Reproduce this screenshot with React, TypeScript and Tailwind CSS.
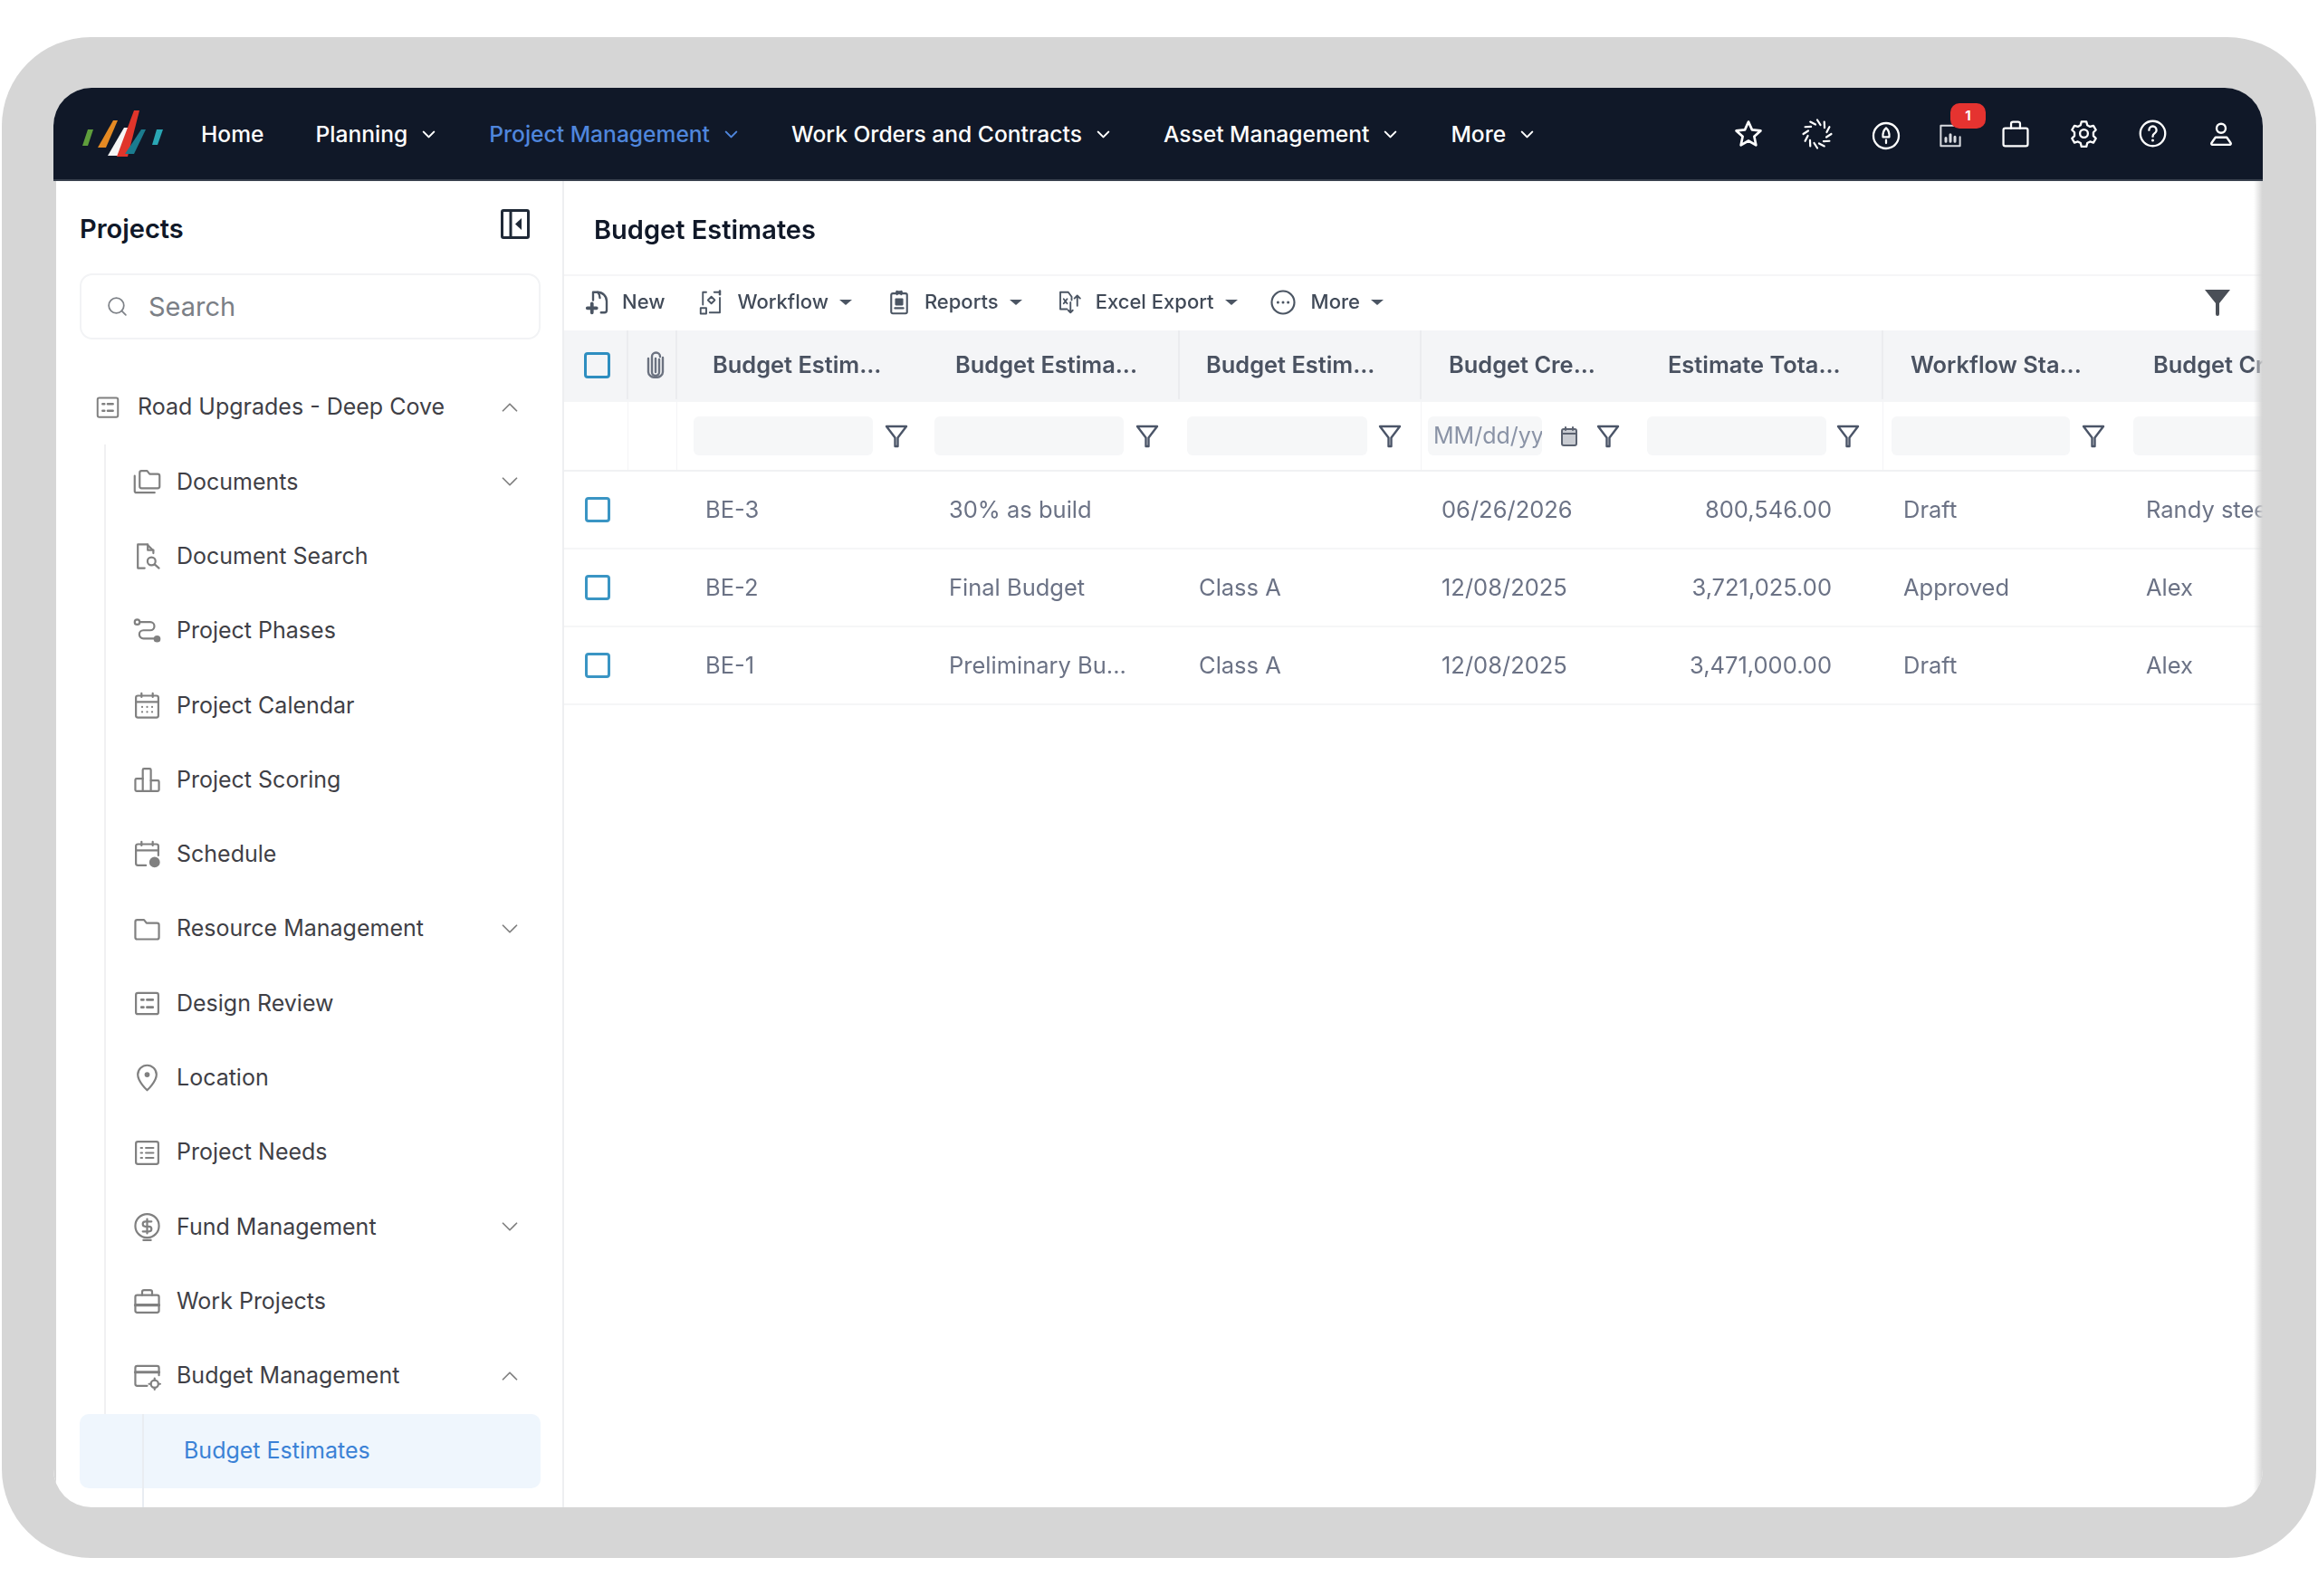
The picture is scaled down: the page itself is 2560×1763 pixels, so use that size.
import type { ReactNode } from "react";
import { ChevronDown, ChevronUp, Search } from "lucide-react";

function Ic({ size = 33, sw = 1.6, color = "#808080", children }: { size?: number; sw?: number; color?: string; children: ReactNode }) {
  return (
    <svg width={size} height={size} viewBox="0 0 24 24" fill="none" stroke={color} strokeWidth={sw} strokeLinecap="round" strokeLinejoin="round" className="shrink-0">
      {children}
    </svg>
  );
}

const SIDE_ICONS: Record<string, ReactNode> = {
  documents: (
    <>
      <path d="M2 7v12a1.5 1.5 0 0 0 1.5 1.5H18" />
      <path d="M6 4.5A1.5 1.5 0 0 1 7.500 3h4.500l2 2.500h6.500A1.500 1.500 0 0 1 22 7v8.500a1.500 1.500 0 0 1-1.500 1.500h-13A1.500 1.500 0 0 1 6 15.500z" />
    </>
  ),
  search: (
    <>
      <path d="M10 21.500H4.500V2.500H12l5 5v2" />
      <path d="M12.500 2.500v4.500H17" />
      <circle cx="15.500" cy="16" r="3.200" />
      <path d="m18 18.500 3.500 3" />
    </>
  ),
  phases: (
    <>
      <circle cx="4" cy="4.500" r="2" />
      <path d="M6 4.500h8.500a3.300 3.300 0 0 1 0 6.600H9a3.300 3.300 0 0 0 0 6.600h9" />
      <circle cx="20" cy="18" r="2" fill="#808080" />
    </>
  ),
  calendar: (
    <>
      <rect x="3" y="4" width="18" height="17.500" rx="1.500" />
      <path d="M3 9h18M7.500 2v3M16.500 2v3" />
      <path d="M8 13h.01M12 13h.01M16 13h.01M8 17h.01M12 17h.01M16 17h.01" />
    </>
  ),
  scoring: (
    <>
      <path d="M8.500 21V4a1 1 0 0 1 1-1h4.500a1 1 0 0 1 1 1v17" />
      <path d="M8.500 11H3.500a1 1 0 0 0-1 1v8a1 1 0 0 0 1 1h17a1 1 0 0 0 1-1v-6.500a1 1 0 0 0-1-1H15" />
    </>
  ),
  schedule: (
    <>
      <path d="M11 21H4.500A1.500 1.500 0 0 1 3 19.500V5.500A1.500 1.500 0 0 1 4.500 4h15A1.500 1.500 0 0 1 21 5.500V13" />
      <path d="M3 9h18M7.500 2v3M16.500 2v3" />
      <circle cx="18" cy="18.500" r="3.500" fill="#808080" />
    </>
  ),
  folder: <path d="M2.500 6A1.500 1.500 0 0 1 4 4.500h5.500l2 2.500H20A1.500 1.500 0 0 1 21.500 8.500v10A1.500 1.500 0 0 1 20 20H4a1.500 1.500 0 0 1-1.500-1.500z" />,
  review: (
    <>
      <rect x="3" y="3.500" width="18" height="17" rx="1.500" />
      <path d="M7.500 9h1.500M12 9h4.500M7.500 15h1.500M12 15h4.500" strokeWidth="2.100" />
    </>
  ),
  location: (
    <>
      <path d="M12 22s7.500-6.800 7.500-12.500a7.500 7.500 0 0 0-15 0C4.500 15.200 12 22 12 22z" />
      <circle cx="12" cy="9.500" r="1.300" fill="#808080" />
    </>
  ),
  needs: (
    <>
      <rect x="3" y="3" width="18" height="18" rx="1.500" />
      <path d="M7 8h1M11 8h6M7 12h1M11 12h6M7 16h1M11 16h6" />
    </>
  ),
  fund: (
    <>
      <circle cx="12" cy="11" r="9.500" />
      <path d="M15.500 7.500h-5a2 2 0 0 0 0 4h3a2 2 0 0 1 0 4h-5M12 5.500v11.500" />
      <path d="M9 22.500h6" />
    </>
  ),
  work: (
    <>
      <rect x="2.500" y="7" width="19" height="14" rx="1.500" />
      <path d="M8 7V4.500a1.500 1.500 0 0 1 1.500-1.500h5A1.500 1.500 0 0 1 16 4.500V7" />
      <path d="M2.500 15h19" strokeWidth="2.200" />
    </>
  ),
  budget: (
    <>
      <path d="M21.500 11V5A1.500 1.500 0 0 0 20 3.500H4A1.500 1.500 0 0 0 2.500 5v13A1.500 1.500 0 0 0 4 19.500h8" />
      <path d="M2.500 8.500h19" strokeWidth="2.200" />
      <circle cx="18" cy="18" r="3" />
      <path d="M18 13.500v1.500M18 21v1.500M13.500 18H15M21 18h1.500" />
    </>
  ),
};

const ITEMS = [
  { key: "documents", label: "Documents", chev: "down" },
  { key: "search", label: "Document Search" },
  { key: "phases", label: "Project Phases" },
  { key: "calendar", label: "Project Calendar" },
  { key: "scoring", label: "Project Scoring" },
  { key: "schedule", label: "Schedule" },
  { key: "folder", label: "Resource Management", chev: "down" },
  { key: "review", label: "Design Review" },
  { key: "location", label: "Location" },
  { key: "needs", label: "Project Needs" },
  { key: "fund", label: "Fund Management", chev: "down" },
  { key: "work", label: "Work Projects" },
  { key: "budget", label: "Budget Management", chev: "up" },
];

const NAV = [
  { label: "Planning" },
  { label: "Project Management", active: true },
  { label: "Work Orders and Contracts" },
  { label: "Asset Management" },
  { label: "More" },
];

function Logo() {
  return (
    <svg width="92" height="56" viewBox="88 120 92 56" className="shrink-0">
      <path d="M96 143h6l-6 18h-6z" fill="#5f9e3c" />
      <path d="M124 133h5l-13 30h-9z" fill="#e58a23" />
      <path d="M136 141h6l-13 31h-11z" fill="#f5f5f5" />
      <path d="M147 122h6l-13 51h-12z" fill="#e0352b" />
      <path d="M155 143h5l-13 27h-10z" fill="#1b7c8f" />
      <path d="M172 143h7l-6 17h-6z" fill="#2aa7b5" />
    </svg>
  );
}

function Spinner() {
  const angles = [0, 30, 60, 90, 120, 150, 180, 210, 240, 270, 300, 330];
  return (
    <svg width="36" height="36" viewBox="0 0 36 36" fill="none" stroke="#fff" strokeWidth="2.200" strokeLinecap="round">
      {angles.map((a) => (
        <path key={a} d="M18 2.500 21.500 8" transform={`rotate(${a} 18 18)`} />
      ))}
    </svg>
  );
}

function TopIcons() {
  return (
    <div className="ml-auto flex items-center pr-[9px]">
      <div className="flex w-[76px] justify-center">
        <Ic size={34} sw={1.9} color="#fff">
          <path d="m12 2.500 2.800 6.200 6.700.8-5 4.500 1.400 6.700L12 17.300 6.100 20.700l1.400-6.700-5-4.500 6.700-.8z" />
        </Ic>
      </div>
      <div className="flex w-[76px] justify-center">
        <Spinner />
      </div>
      <div className="flex w-[73px] justify-center pl-[3px] pt-[5px]">
        <Ic size={32} sw={1.700} color="#fff">
          <circle cx="12" cy="12" r="10.500" />
          <path d="M12 5.500c2 1.800 3 3.800 2.600 7.500H9.400C9 9.300 10 7.300 12 5.500z" />
          <path d="M12 15.500v2.500" />
        </Ic>
      </div>
      <div className="relative flex w-[66px] justify-center pl-[5px] pt-[5px]">
        <Ic size={30} sw={1.600} color="#d9dbe0">
          <path d="M15 3H3.500v18h17v-8" />
          <path d="M8 17v-3M12 17v-6M16 17v-4" strokeWidth="2.400" />
        </Ic>
        <span className="absolute left-[36px] top-[-16px] flex h-[28px] w-[39px] items-center justify-center rounded-[10px] bg-[#e53330] text-[15px] font-bold text-white">1</span>
      </div>
      <div className="flex w-[80px] justify-center pl-[4px]">
        <Ic size={34} sw={1.600} color="#fff">
          <rect x="2.500" y="7.500" width="19" height="14" rx="1.500" />
          <path d="M8.500 7.500V4a1.500 1.500 0 0 1 1.500-1.500h4A1.500 1.500 0 0 1 15.500 4v3.500" />
        </Ic>
      </div>
      <div className="flex w-[74px] justify-center">
        <Ic size={33} sw={1.700} color="#fff">
          <path d="M10 2.500h4l.7 2.800 2.200 1.200 2.700-.8 2 3.400-2 2v2.800l2 2-2 3.400-2.700-.8-2.200 1.200-.7 2.800h-4l-.7-2.800-2.200-1.200-2.700.8-2-3.400 2-2v-2.800l-2-2 2-3.400 2.700.8 2.200-1.200z" />
          <circle cx="12" cy="12" r="3.200" />
        </Ic>
      </div>
      <div className="flex w-[78px] justify-center">
        <Ic size={33} sw={1.700} color="#fff">
          <circle cx="12" cy="12" r="10" />
          <path d="M9 9.200a3 3 0 1 1 4.500 2.600c-1 .6-1.500 1.300-1.500 2.500" />
          <path d="M12 17.500h.01" strokeWidth="2.200" />
        </Ic>
      </div>
      <div className="flex w-[74px] justify-center">
        <Ic size={30} sw={1.900} color="#fff">
          <circle cx="12" cy="7" r="4" />
          <path d="M7 15h10l3.500 5a1 1 0 0 1-.8 1.500H4.300A1 1 0 0 1 3.500 20z" />
        </Ic>
      </div>
    </div>
  );
}

function TopBar() {
  return (
    <header className="flex h-[103px] shrink-0 items-center border-b-2 border-[#39414e] bg-[#101828] pl-[30px]">
      <Logo />
      <nav className="ml-[41px] flex items-center gap-[55px] pt-[2px] text-[24.6px] font-medium text-white">
        <span className="mr-[2px]">Home</span>
        {NAV.map((n) => (
          <span key={n.label} className={n.active ? "flex items-center gap-[12px] text-[#4f86dc]" : "flex items-center gap-[12px]"}>
            {n.label}
            <ChevronDown size={23} strokeWidth={2.2} className={n.active ? "text-[#4f86dc]" : "text-white"} />
          </span>
        ))}
      </nav>
      <TopIcons />
    </header>
  );
}

function SideRow({ item }: { item: (typeof ITEMS)[number] }) {
  return (
    <div className="flex h-[82.3px] items-center pl-[58px] pr-[19px] text-[25px] text-[#3f3f46]">
      <span className="flex w-[49px] shrink-0 justify-start">
        <Ic>{SIDE_ICONS[item.key]}</Ic>
      </span>
      <span>{item.label}</span>
      {item.chev === "down" && <ChevronDown size={30} strokeWidth={1.4} className="ml-auto text-[#808080]" />}
      {item.chev === "up" && <ChevronUp size={30} strokeWidth={1.4} className="ml-auto text-[#808080]" />}
    </div>
  );
}

function Sidebar() {
  return (
    <aside className="flex w-[561px] shrink-0 flex-col overflow-hidden border-r-2 border-[#eeeff1] pl-[26px] pr-[24px]">
      <div className="flex h-[102px] shrink-0 items-center justify-between pt-[4px]">
        <h2 className="text-[29px] font-semibold text-[#101828]">Projects</h2>
        <svg width="32" height="33" viewBox="0 0 32 33" fill="none" className="mb-[12px] mr-[12px]">
          <rect x="1.500" y="1.500" width="29" height="30" rx="1.500" stroke="#1f2937" strokeWidth="3" />
          <path d="M11 2v29" stroke="#1f2937" strokeWidth="3" />
          <path d="M23 10v13l-7-6.500z" fill="#1f2937" />
        </svg>
      </div>
      <div className="flex h-[73px] shrink-0 items-center rounded-[14px] border-2 border-[#f2f3f5] pl-[27px] text-[29px] text-[#7b7f86]">
        <Search size={25} strokeWidth={1.7} className="mr-[22px] text-[#7f8389]" />
        Search
      </div>
      <div className="relative mt-[34px]">
        <span className="absolute bottom-0 left-[27px] top-[82px] w-[2px] bg-[#f0f0f2]" />
        <div className="flex h-[82.3px] items-center pl-[16px] pr-[19px] text-[25px] text-[#3f3f46]">
          <span className="w-[48px] shrink-0">
            <Ic size={30}>{SIDE_ICONS.review}</Ic>
          </span>
          <span>Road Upgrades - Deep Cove</span>
          <ChevronUp size={30} strokeWidth={1.4} className="ml-auto text-[#808080]" />
        </div>
        {ITEMS.map((it) => (
          <SideRow key={it.key} item={it} />
        ))}
        <div className="relative mt-[1px] flex h-[82px] items-center rounded-[10px] bg-[#eff6fd] pl-[115px] text-[25px] text-[#3b82d6]">
          <span className="absolute left-[69px] top-0 h-[104px] w-[2px] bg-[#e9edf2]" />
          Budget Estimates
        </div>
      </div>
    </aside>
  );
}

function Caret() {
  return <span className="ml-[12px] h-0 w-0 border-x-[7px] border-t-[6px] border-x-transparent border-t-[#4b5563]" />;
}

function Toolbar() {
  const dark = "#4b5563";
  return (
    <div className="flex h-[62px] shrink-0 items-center border-t-2 border-[#f6f6f7] pb-[3px] pl-[22px] pr-[35px] text-[22px] font-medium text-[#414a58]">
      <span className="flex items-center gap-[12px]">
        <Ic size={30} sw={1.900} color={dark}>
          <path d="M8 10V3h4a8 8 0 0 1 8 8v8a2 2 0 0 1-2 2h-3" />
          <path d="M12 3c1.500 1.500 2 3 2 5" />
          <path d="M7 13v8M3 17h8" strokeWidth="3" />
        </Ic>
        New
      </span>
      <span className="ml-[36px] flex items-center gap-[14px]">
        <span className="flex items-center">
          <Ic size={30} sw={1.500} color={dark}>
            <path d="M8 3H5v11M20 8v13H11M15 3h4" />
            <path d="m12.500 7 3 3-3 3-3-3z" />
            <rect x="3" y="17" width="5" height="5" />
            <path d="M20 2v3" strokeWidth="2" />
          </Ic>
        </span>
        <span className="flex items-center">
          Workflow
          <Caret />
        </span>
      </span>
      <span className="ml-[38px] flex items-center gap-[14px]">
        <Ic size={28} sw={1.800} color={dark}>
          <rect x="4.500" y="3.500" width="15" height="19" rx="1.500" />
          <path d="M9.500 2h5M10 1.500v3M14 1.500v3" />
          <rect x="9" y="9" width="6" height="5" fill={dark} />
          <path d="M8 17.500h8" />
        </Ic>
        <span className="flex items-center">
          Reports
          <Caret />
        </span>
      </span>
      <span className="ml-[37px] flex items-center gap-[14px]">
        <Ic size={30} sw={1.500} color={dark}>
          <path d="M10 18H4V3h7l3 4v3" />
          <path d="m7 9 3 4M10 9l-3 4" />
          <path d="M19 6v9M16.500 8.500 19 6l2.500 2.500M13 12v9M11 19l2 2 2-2" />
        </Ic>
        <span className="flex items-center">
          Excel Export
          <Caret />
        </span>
      </span>
      <span className="ml-[35px] flex items-center gap-[16px]">
        <Ic size={30} sw={1.700} color={dark}>
          <circle cx="12" cy="12" r="10" />
          <path d="M7.500 12h.01M12 12h.01M16.500 12h.01" strokeWidth="2.400" />
        </Ic>
        <span className="flex items-center">
          More
          <Caret />
        </span>
      </span>
      <svg width="30" height="30" viewBox="0 0 30 30" className="ml-auto" fill="#4a4f57">
        <path d="M1 1h28L17 16v12a2 2 0 0 1-4 0V16z" />
      </svg>
    </div>
  );
}

function Check({ dim }: { dim?: boolean }) {
  return <span className={dim ? "h-[28px] w-[28px] rounded-[4px] border-[3px] border-[#3a95c4]" : "h-[29px] w-[29px] rounded-[4px] border-[3px] border-[#2e8ec0]"} />;
}

function FilterIcon() {
  return (
    <svg width="26" height="26" viewBox="0 0 26 26" fill="none" stroke="#4b5568" strokeWidth="2.400" strokeLinejoin="round" className="shrink-0">
      <path d="M2 2h22L14.500 14.500V24h-3V14.500z" />
    </svg>
  );
}

function FilterBox({ className }: { className: string }) {
  return <span className={`h-[43px] rounded-[6px] bg-[#f6f7f8] ${className}`} />;
}

const GRID = "grid grid-cols-[71px_54px_278px_277px_267px_240px_270px_270px_200px]";

const ROWS = [
  { id: "BE-3", name: "30% as build", cls: "", date: "06/26/2026", total: "800,546.00", state: "Draft", by: "Randy steel" },
  { id: "BE-2", name: "Final Budget", cls: "Class A", date: "12/08/2025", total: "3,721,025.00", state: "Approved", by: "Alex" },
  { id: "BE-1", name: "Preliminary Bu...", cls: "Class A", date: "12/08/2025", total: "3,471,000.00", state: "Draft", by: "Alex" },
];

function Table() {
  return (
    <div className="min-w-0 overflow-hidden">
      <div className={`${GRID} h-[79px] items-center bg-[#f4f5f7] pb-[3px] text-[25.4px] font-semibold whitespace-nowrap text-[#4a5261]`}>
        <div className="flex h-full items-center border-r-2 border-[#ebecef] pl-[22px]">
          <Check />
        </div>
        <div className="flex h-full items-center justify-center border-r-2 border-[#ebecef] pl-[8px]">
          <svg width="20" height="30" viewBox="0 0 20 30" fill="none" stroke="#6b7280" strokeWidth="2.400" strokeLinecap="round">
            <path d="M14 9v14a4 4 0 0 1-8 0V6a4.500 4.500 0 0 1 9 0" />
            <path d="M10 8v15M2 8v15a8 6 0 0 0 16 0V7" />
          </svg>
        </div>
        <div className="pl-[39px]">Budget Estim...</div>
        <div className="flex h-full items-center border-r-2 border-[#ebecef] pl-[29px]">Budget Estima...</div>
        <div className="flex h-full items-center border-r-2 border-[#ebecef] pl-[29px]">Budget Estim...</div>
        <div className="pl-[30px]">Budget Cre...</div>
        <div className="flex h-full items-center border-r-2 border-[#ebecef] pl-[32px]">Estimate Tota...</div>
        <div className="pl-[30px]">Workflow Sta...</div>
        <div className="pl-[28px]">Budget Created</div>
      </div>
      <div className={`${GRID} h-[77px] items-center border-b-2 border-[#f0f1f3]`}>
        <div className="h-full border-r border-[#f4f4f6]" />
        <div className="h-full border-r border-[#f4f4f6]" />
        <div className="flex items-center gap-[13px] pl-[18px]">
          <FilterBox className="w-[198px]" />
          <FilterIcon />
        </div>
        <div className="flex items-center gap-[13px] pl-[6px]">
          <FilterBox className="w-[209px]" />
          <FilterIcon />
        </div>
        <div className="flex h-full items-center gap-[12px] border-r border-[#f4f4f6] pl-[8px]">
          <FilterBox className="w-[199px]" />
          <FilterIcon />
        </div>
        <div className="flex items-center pl-[7px]">
          <span className="flex h-[43px] w-[126px] items-center overflow-hidden rounded-[6px] bg-[#f6f7f8] pl-[6px] text-[25px] whitespace-nowrap text-[#8a93a6]">MM/dd/yy</span>
          <span className="ml-[18px]">
            <Ic size={24} sw={2} color="#5b6270">
              <rect x="4" y="4" width="16" height="18" rx="2" fill="#c9ccd2" />
              <path d="M4 9h16M8 2v3M16 2v3" />
            </Ic>
          </span>
          <span className="ml-[18px]">
            <FilterIcon />
          </span>
        </div>
        <div className="flex h-full items-center gap-[11px] border-r border-[#f4f4f6] pl-[9px]">
          <FilterBox className="w-[198px]" />
          <FilterIcon />
        </div>
        <div className="flex items-center gap-[13px] pl-[9px]">
          <FilterBox className="w-[197px]" />
          <FilterIcon />
        </div>
        <div className="pl-[6px]">
          <FilterBox className="block w-[190px]" />
        </div>
      </div>
      {ROWS.map((r) => (
        <div key={r.id} className={`${GRID} h-[86px] items-center border-b-2 border-[#f5f6f7] text-[25.5px] whitespace-nowrap text-[#6b7285]`}>
          <div className="flex pl-[23px]">
            <Check dim />
          </div>
          <div />
          <div className="pl-[31px]">{r.id}</div>
          <div className="pl-[22px]">{r.name}</div>
          <div className="pl-[21px]">{r.cls}</div>
          <div className="pl-[22px]">{r.date}</div>
          <div className="pr-[57px] text-right">{r.total}</div>
          <div className="pl-[22px]">{r.state}</div>
          <div className="pl-[20px]">{r.by}</div>
        </div>
      ))}
    </div>
  );
}

export default function App() {
  return (
    <div className="h-[1763px] w-[2560px] overflow-hidden bg-white pl-[2px] pt-[41px] [font-family:Inter,sans-serif]">
      <div className="h-[1680px] w-[2556px] rounded-[98px] bg-[#d6d6d6] pl-[57px] pt-[56px]">
        <div className="relative flex h-[1568px] w-[2440px] flex-col overflow-hidden rounded-[42px] bg-white blur-[0.5px]">
          <TopBar />
          <div className="flex min-h-0 flex-1 border-l-[3px] border-[#d6d6d6]">
            <Sidebar />
            <main className="flex min-w-0 flex-1 flex-col">
              <div className="flex h-[103px] shrink-0 items-center pl-[33px] pt-[4px]">
                <h1 className="text-[29px] font-semibold text-[#101828]">Budget Estimates</h1>
              </div>
              <Toolbar />
              <Table />
            </main>
          </div>
          <span className="absolute bottom-0 right-0 top-[103px] w-[10px] bg-gradient-to-l from-[#d4d4d4] to-transparent" />
        </div>
      </div>
    </div>
  );
}
